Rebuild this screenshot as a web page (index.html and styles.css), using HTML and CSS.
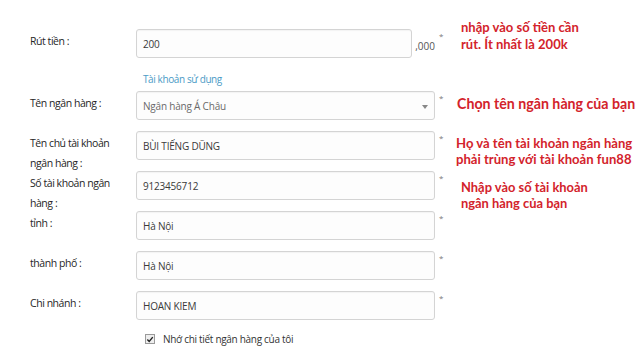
FILE: index.html
```html
<!DOCTYPE html>
<html lang="vi">
  <head>
    <meta charset="UTF-8" />
    <meta name="viewport" content="width=device-width, initial-scale=1.0" />
    <title>Rút tiền</title>
    <link rel="stylesheet" href="styles.css">
  </head>

  <body>
    <form class="withdraw">
      <!-- Amount -->
      <div class="row row-amount">
        <label class="label">Rút tiền :</label>
        <div class="field">
          <div class="input input-amount">200</div>
          <span class="suffix">,000</span>
        </div>
        <span class="star">*</span>
        <div class="note note-amount">nhập vào số tiền cần<br />rút. Ít nhất là 200k</div>
      </div>

      <div class="account-link-row">
        <a class="account-link" href="#">Tài khoản sử dụng</a>
      </div>

      <!-- Bank details -->
      <div class="row">
        <label class="label">Tên ngân hàng :</label>
        <div class="field">
          <div class="input select">
            <span class="placeholder">Ngân hàng Á Châu</span>
            <span class="caret"></span>
          </div>
        </div>
        <span class="star">*</span>
        <div class="note note-bank">Chọn tên ngân hàng của bạn</div>
      </div>

      <div class="row">
        <label class="label">Tên chủ tài khoản<br />ngân hàng :</label>
        <div class="field">
          <div class="input">BÙI TIẾNG DŨNG</div>
        </div>
        <span class="star">*</span>
        <div class="note note-owner">Họ và tên tài khoản ngân hàng<br />phải trùng với tài khoản fun88</div>
      </div>

      <div class="row">
        <label class="label">Số tài khoản ngân<br />hàng :</label>
        <div class="field">
          <div class="input">9123456712</div>
        </div>
        <span class="star">*</span>
        <div class="note note-number">Nhập vào số tài khoản<br />ngân hàng của bạn</div>
      </div>

      <div class="row">
        <label class="label">tỉnh :</label>
        <div class="field">
          <div class="input">Hà Nội</div>
        </div>
        <span class="star">*</span>
      </div>

      <div class="row">
        <label class="label">thành phố :</label>
        <div class="field">
          <div class="input">Hà Nội</div>
        </div>
        <span class="star">*</span>
      </div>

      <div class="row">
        <label class="label">Chi nhánh :</label>
        <div class="field">
          <div class="input">HOAN KIEM</div>
        </div>
        <span class="star">*</span>
      </div>

      <!-- Remember -->
      <div class="remember-row">
        <span class="checkbox">
          <svg width="9" height="9" viewBox="0 0 9 9">
            <path d="M1.5 4.5 L3.6 6.7 L7.6 1.8" fill="none" stroke="#222" stroke-width="1.6" />
          </svg>
        </span>
        <span class="remember-text">Nhớ chi tiết ngân hàng của tôi</span>
      </div>

      <div class="actions">
        <span class="action-button"></span>
      </div>
    </form>
  </body>
</html>
```

FILE: styles.css
```css
html,
body {
  margin: 0;
  background: #fff;
}

body {
  font-family: "Open Sans", "Noto Sans", sans-serif;
  color: #333;
  overflow: hidden;
}

* {
  box-sizing: border-box;
}

/* --- Form --- */

.withdraw {
  padding: 29px 0 0 30px;
}

.row {
  display: flex;
  align-items: flex-start;
  height: 40px;
}

.row-amount {
  height: 29px;
}

.label {
  flex-shrink: 0;
  width: 106px;
  padding-top: 2px;
  font-size: 10.5px;
  line-height: 20px;
  letter-spacing: -0.45px;
  color: #262626;
}

.field {
  flex-shrink: 0;
  display: flex;
  align-items: center;
  width: 299px;
}

/* --- Inputs --- */

.input {
  display: flex;
  align-items: center;
  width: 299px;
  height: 29px;
  padding: 0 6px;
  border: 1px solid #d4d4d4;
  border-radius: 3px;
  background: #fdfdfd;
  box-shadow: inset 0 1px 1px rgba(0, 0, 0, 0.04);
  font-size: 10px;
  letter-spacing: -0.2px;
  color: #3a3a3a;
}

.input-amount {
  width: 277px;
}

.suffix {
  padding-left: 3px;
  padding-top: 4px;
  font-size: 10px;
  color: #555;
}

.select {
  justify-content: space-between;
  padding-right: 6px;
}

.placeholder {
  color: #6a6a6a;
}

.caret {
  width: 0;
  height: 0;
  margin-top: 2px;
  border-left: 3px solid transparent;
  border-right: 3px solid transparent;
  border-top: 4px solid #888;
}

.star {
  flex-shrink: 0;
  width: 20px;
  padding: 3px 0 0 4px;
  font-size: 8px;
  line-height: 1;
  color: #777;
}

/* --- Account link --- */

.account-link-row {
  height: 33px;
  padding: 8px 0 0 113px;
}

.account-link {
  font-size: 10px;
  line-height: 20px;
  letter-spacing: -0.4px;
  color: #4b9bc6;
  text-decoration: none;
}

/* --- Notes (red hints) --- */

.note {
  font-family: Lato, "Open Sans", sans-serif;
  font-weight: 700;
  color: #d3232b;
  white-space: nowrap;
}

.note-amount {
  margin: -10px 0 0 6px;
  font-size: 13px;
  line-height: 17px;
}

.note-bank {
  margin: 4px 0 0 2px;
  font-size: 14.2px;
  line-height: 18px;
}

.note-owner {
  margin: 4px 0 0 1px;
  font-size: 13.1px;
  line-height: 16px;
}

.note-number {
  margin: 8px 0 0 6px;
  font-size: 12.9px;
  line-height: 16px;
}

/* --- Remember --- */

.remember-row {
  display: flex;
  align-items: center;
  height: 14px;
  padding-left: 115px;
  margin-top: 1px;
}

.checkbox {
  display: flex;
  align-items: center;
  justify-content: center;
  width: 10px;
  height: 10px;
  border: 1px solid #9a9a9a;
  background: #eee;
}

.remember-text {
  padding-left: 8px;
  font-size: 10px;
  letter-spacing: -0.3px;
  color: #333;
}

.actions {
  padding: 0 0 0 25px;
}

.action-button {
  display: block;
  width: 28px;
  height: 20px;
  border-top: 2px solid #f2c4c4;
}
```
